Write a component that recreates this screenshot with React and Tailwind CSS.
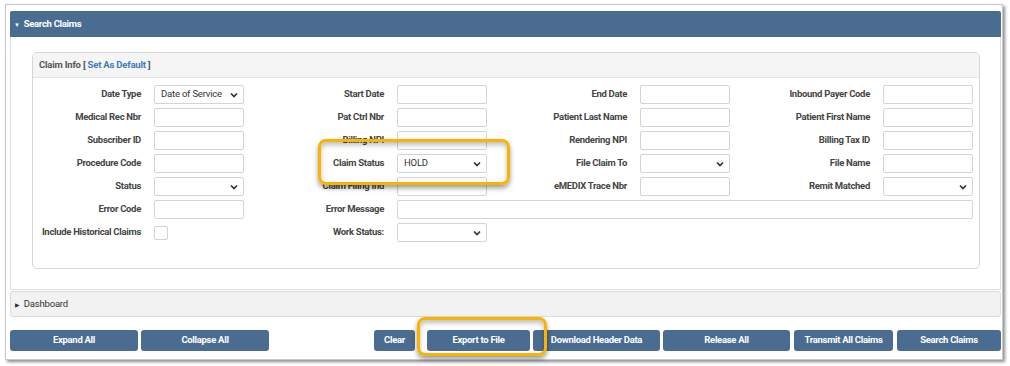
import { Fragment } from 'react';

const font = { fontFamily: 'Roboto, "Liberation Sans", sans-serif' };

function Chevron() {
  return (
    <svg width="8" height="6" viewBox="0 0 8 6" className="shrink-0">
      <path d="M1 1.5 L4 4.5 L7 1.5" fill="none" stroke="#333" strokeWidth="1.7" />
    </svg>
  );
}

function Field({ type, value }) {
  if (type === 'check') {
    return <div className="w-[14px] h-[14px] border border-[#d4d4d4] rounded-[2px] bg-white" />;
  }
  if (type === 'select') {
    return (
      <div className="w-[90px] h-[19px] border border-[#d4d4d4] rounded-[2px] bg-white flex items-center justify-between pl-[6px] pr-[5px] text-[9.5px] tracking-[-0.2px] text-[#333]">
        <span>{value}</span>
        <Chevron />
      </div>
    );
  }
  return <div className="w-[90px] h-[19px] border border-[#d4d4d4] rounded-[2px] bg-white" />;
}

function Label({ children }) {
  return (
    <div className="w-[108px] shrink-0 text-right text-[9.5px] tracking-[-0.3px] font-bold text-[#454545] whitespace-nowrap">
      {children}
    </div>
  );
}

function Cell({ label, type, value }) {
  return (
    <div className="w-[243px] shrink-0 flex items-center">
      <Label>{label}</Label>
      <div className="ml-[13px]"><Field type={type} value={value} /></div>
    </div>
  );
}

const rows = [
  [['Date Type', 'select', 'Date of Service'], ['Start Date'], ['End Date'], ['Inbound Payer Code']],
  [['Medical Rec Nbr'], ['Pat Ctrl Nbr'], ['Patient Last Name'], ['Patient First Name']],
  [['Subscriber ID'], ['Billing NPI'], ['Rendering NPI'], ['Billing Tax ID']],
  [['Procedure Code'], ['Claim Status', 'select', 'HOLD'], ['File Claim To', 'select'], ['File Name']],
  [['Status', 'select'], ['Claim Filing Ind'], ['eMEDIX Trace Nbr'], ['Remit Matched', 'select']],
];

const leftButtons = [['Expand All', 'w-[128px]'], ['Collapse All', 'w-[128px]']];
const rightButtons = [
  ['Clear', 'w-[41px] mr-[9px]'],
  ['Export to File', 'w-[103px]'],
  ['Download Header Data', 'w-[127px]'],
  ['Release All', 'w-[127px]'],
  ['Transmit All Claims', 'w-[99px] ml-[1px]'],
  ['Search Claims', 'w-[104px] ml-[1px]'],
];

function Btn({ label, cls }) {
  return (
    <div className={`${cls} h-[21px] rounded-[3px] bg-[#4a6c91] text-white text-[9.5px] tracking-[-0.3px] font-bold flex items-center justify-center shrink-0`}>
      {label}
    </div>
  );
}

export default function App() {
  return (
    <div className="w-[1010px] h-[366px] bg-white pt-[4px] pl-[5px] relative overflow-hidden" style={font}>
      <div className="w-[998px] h-[356px] border border-[#c9c9c9] shadow-[2px_2px_3px_rgba(0,0,0,0.45)] pt-[6px] px-[4px] flex flex-col">
        {/* Search Claims panel */}
        <div className="w-[991px] h-[279px] border border-[#dcdcdc] rounded-t-[3px] flex flex-col">
          <div className="h-[26px] bg-[#4a6c91] rounded-t-[2px] flex items-center pl-[4px] text-white text-[9.5px] tracking-[-0.3px] font-bold -mx-px -mt-px">
            <span className="text-[6px] mr-[4px]">▼</span>Search Claims
          </div>
          <div className="pl-[21px] pt-[15px]">
            <div className="w-[948px] h-[217px] border border-[#d6d6d6] rounded-[5px] flex flex-col overflow-hidden">
              <div className="h-[25px] shrink-0 bg-[#f5f5f5] border-b border-[#e4e4e4] flex items-center pl-[6px] text-[9.5px] tracking-[-0.2px] font-bold text-[#555]">
                Claim Info [&nbsp;<span className="text-[#3e7cb9]">Set As Default</span>&nbsp;]
              </div>
              <div className="pt-[7px] flex flex-col gap-[4px]">
                {rows.map((r, i) => (
                  <div key={i} className="flex h-[19px]">
                    {r.map((c, j) => (
                      <Fragment key={j}><Cell label={c[0]} type={c[1]} value={c[2]} /></Fragment>
                    ))}
                  </div>
                ))}
                <div className="flex h-[19px]">
                  <Cell label="Error Code" />
                  <div className="flex items-center shrink-0">
                    <Label>Error Message</Label>
                    <div className="ml-[13px] w-[576px] h-[19px] border border-[#d4d4d4] rounded-[2px]" />
                  </div>
                </div>
                <div className="flex h-[19px]">
                  <Cell label="Include Historical Claims" type="check" />
                  <Cell label="Work Status:" type="select" />
                </div>
              </div>
            </div>
          </div>
        </div>
        {/* Dashboard */}
        <div className="mt-[1px] w-[991px] h-[26px] shrink-0 bg-[#f2f2f2] border border-[#dcdcdc] rounded-[3px] flex items-center pl-[4px] text-[9.5px] tracking-[-0.2px] text-[#333]">
          <span className="text-[6px] mr-[4px]">▶</span>Dashboard
        </div>
        {/* Buttons */}
        <div className="mt-[13px] w-[991px] flex justify-between">
          <div className="flex gap-[3px]">
            {leftButtons.map(([l, c]) => <Btn key={l} label={l} cls={c} />)}
          </div>
          <div className="flex gap-[3px]">
            {rightButtons.map(([l, c]) => <Btn key={l} label={l} cls={c} />)}
          </div>
        </div>
      </div>

      {/* highlight overlays */}
      <div className="absolute left-[318px] top-[139px] w-[192px] h-[46px] border-[3px] border-[#f9b300] rounded-[8px] shadow-[0_3px_5px_rgba(0,0,0,0.4),inset_0_3px_5px_rgba(0,0,0,0.25)]" />
      <div className="absolute left-[417px] top-[317px] w-[130px] h-[39px] border-[3px] border-[#f9b300] rounded-[8px] shadow-[0_3px_5px_rgba(0,0,0,0.4),inset_0_3px_5px_rgba(0,0,0,0.25)]" />
    </div>
  );
}
